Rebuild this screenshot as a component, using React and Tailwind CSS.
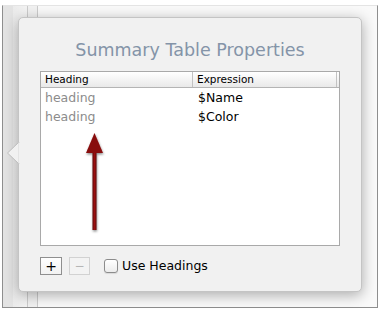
import React from 'react';

function Arrow() {
  return (
    <svg className="absolute left-[80px] top-[128px]" width="30" height="108" viewBox="0 0 30 108">
      <defs>
        <linearGradient id="shaft" x1="0" x2="1" y1="0" y2="0">
          <stop offset="0" stopColor="#5e0606" />
          <stop offset="0.5" stopColor="#9a1010" />
          <stop offset="1" stopColor="#5e0606" />
        </linearGradient>
        <filter id="ds" x="-50%" y="-10%" width="200%" height="130%">
          <feDropShadow dx="0.5" dy="1.5" stdDeviation="1.2" floodColor="#000" floodOpacity="0.45" />
        </filter>
      </defs>
      <g filter="url(#ds)">
        <rect x="12.5" y="22" width="4" height="80" fill="url(#shaft)" />
        <polygon points="14.5,5 6,25 23,25" fill="#880b0b" />
      </g>
    </svg>
  );
}

function Pointer() {
  return (
    <svg className="absolute left-[6px] top-[141px]" width="14" height="24" viewBox="0 0 14 24">
      <polygon points="13,1 1.5,12 13,23" fill="#f1f1f1" stroke="#bdbdbd" strokeWidth="1" />
      <rect x="12.5" y="1.5" width="2" height="21" fill="#f1f1f1" />
    </svg>
  );
}

export default function App() {
  return (
    <div
      className="relative w-[380px] h-[312px] bg-white overflow-hidden pt-[5px] px-[2px] pb-[4px]"
      style={{ fontFamily: '"DejaVu Sans", "Liberation Sans", sans-serif' }}
    >
      {/* window behind the popover */}
      <div className="flex h-full border-x border-b border-[#8e8e8e] border-t border-t-[#e4e4e4] bg-[#fafafa]">
        <div className="w-[10px] bg-[#e3e3e3]" />
        <div className="w-[14px] bg-gradient-to-r from-[#ebebeb] to-[#f3f3f3]" />
        <div className="w-[1px] bg-[#cbcbcb]" />
        <div className="w-[9px] bg-[#f1f1f1]" />
        <div className="w-[1px] bg-[#cbcbcb]" />
        <div className="flex-1 bg-[#f9f9f9]" />
      </div>

      {/* popover */}
      <div className="absolute left-[18px] top-[17px] w-[344px] h-[275px] rounded-[5px] bg-[#f1f1f1] border border-[#c4c4c4] shadow-[0_3px_14px_rgba(0,0,0,0.32)] flex flex-col">
        <h1 className="pt-[21px] h-[53px] text-center text-[17.5px] leading-[22px] text-[#8494a8]">
          Summary Table Properties
        </h1>

        <div className="mx-[21px] h-[175px] border border-[#a9a9a9] bg-white flex flex-col">
          <div className="flex h-[16px] border-b border-[#b4b4b4] bg-gradient-to-b from-white to-[#e9e9e9] text-[10.5px] leading-[15px] text-black">
            <div className="w-[152px] pl-[4px] border-r border-[#c2c2c2]">Heading</div>
            <div className="flex-1 pl-[4px] border-r border-[#c2c2c2] mr-[2px]">Expression</div>
          </div>
          {[
            ['heading', '$Name'],
            ['heading', '$Color'],
          ].map(([h, e], i) => (
            <div key={i} className="flex h-[19px] text-[12.5px] leading-[19px]">
              <div className="w-[153px] pl-[4px] text-[#8c8c8c]">{h}</div>
              <div className="flex-1 pl-[4px] text-black">{e}</div>
            </div>
          ))}
        </div>

        <div className="mx-[21px] mt-[11px] flex items-center">
          <button className="w-[22px] h-[18px] border border-[#8f8f8f] bg-gradient-to-b from-white to-[#f2f2f2] flex items-center justify-center text-[14px] leading-none text-black">
            +
          </button>
          <button className="ml-[7px] w-[21px] h-[18px] border border-[#d2d2d2] bg-[#f3f3f3] flex items-center justify-center text-[12px] leading-none text-[#b5b5b5]">
            −
          </button>
          <span className="ml-[14px] w-[14px] h-[14px] rounded-[3px] border border-[#8c8c8c] bg-gradient-to-b from-white to-[#ececec] shadow-[0_1px_1px_rgba(0,0,0,0.1)]" />
          <span className="ml-[4px] text-[12.5px] leading-[18px] text-black">Use Headings</span>
        </div>
      </div>

      <Pointer />
      <Arrow />
    </div>
  );
}
